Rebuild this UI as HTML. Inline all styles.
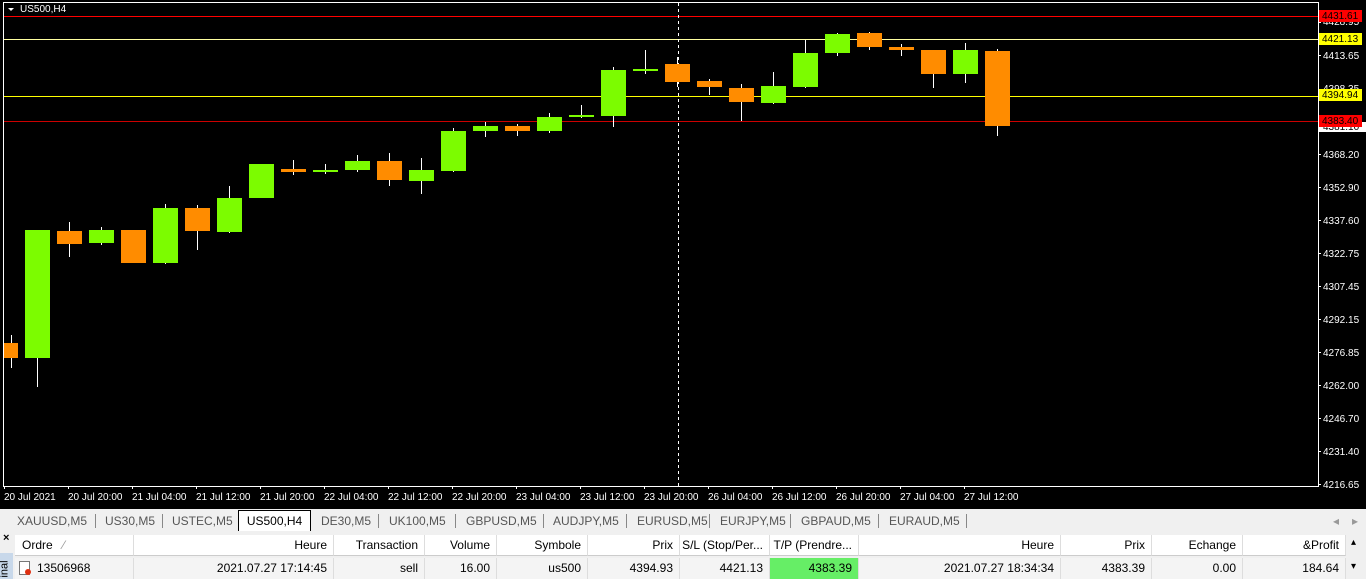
<!DOCTYPE html>
<html><head><meta charset="utf-8"><style>
body{margin:0;width:1366px;height:579px;overflow:hidden;background:#000;font-family:"Liberation Sans",Tahoma,sans-serif;}
#tabs{position:absolute;left:0;top:507px;width:1366px;height:23px;background:#f0f0f0;border-top:2px solid #000;font-size:12px;color:#555;}
.tab{position:absolute;top:5px;height:16px;line-height:14px;}
.sep{position:absolute;top:5px;width:1px;height:14px;background:#888;}
#term{position:absolute;left:0;top:531px;width:1366px;height:48px;background:#f0f0f0;font-size:12px;color:#000;}
.h,.c{position:absolute;height:21px;line-height:21px;text-align:right;box-sizing:border-box;padding-right:6px;}
.h{top:4px;background:#fff;border-right:1px solid #ddd;border-bottom:1px solid #ccc;}
.c{top:27px;background:#f4f4f4;border-right:1px solid #ddd;}
</style></head><body>
<svg width="1366" height="507" style="position:absolute;left:0;top:0" font-family="Liberation Sans, sans-serif" font-size="10">
<rect x="0" y="0" width="1366" height="507" fill="#000"/>
<rect x="3.5" y="2.5" width="1315" height="484" fill="none" stroke="#fff"/>
<line x1="4" y1="16.5" x2="1318" y2="16.5" stroke="#f00"/>
<line x1="4" y1="39.5" x2="1318" y2="39.5" stroke="#ffffa0"/>
<line x1="4" y1="96.5" x2="1318" y2="96.5" stroke="#ff0"/>
<line x1="4" y1="121.5" x2="1318" y2="121.5" stroke="#c00"/>
<line x1="678.5" y1="3" x2="678.5" y2="486" stroke="#fff" stroke-dasharray="3,3"/>
<polygon points="8,8 14,8 11,11" fill="#fff"/>
<text x="20" y="12" fill="#fff">US500,H4</text>
<g stroke="#fff">
<line x1="11.5" y1="335" x2="11.5" y2="368"/><line x1="37.5" y1="230" x2="37.5" y2="387"/><line x1="69.5" y1="222" x2="69.5" y2="257"/><line x1="101.5" y1="227" x2="101.5" y2="245"/><line x1="133.5" y1="230" x2="133.5" y2="263"/><line x1="165.5" y1="204" x2="165.5" y2="264"/><line x1="197.5" y1="205" x2="197.5" y2="250"/><line x1="229.5" y1="186" x2="229.5" y2="233"/><line x1="261.5" y1="164" x2="261.5" y2="198"/><line x1="293.5" y1="160" x2="293.5" y2="175"/><line x1="325.5" y1="164" x2="325.5" y2="174"/><line x1="357.5" y1="155" x2="357.5" y2="172"/><line x1="389.5" y1="153" x2="389.5" y2="186"/><line x1="421.5" y1="158" x2="421.5" y2="194"/><line x1="453.5" y1="128" x2="453.5" y2="172"/><line x1="485.5" y1="122" x2="485.5" y2="137"/><line x1="517.5" y1="124" x2="517.5" y2="136"/><line x1="549.5" y1="113" x2="549.5" y2="133"/><line x1="581.5" y1="105" x2="581.5" y2="118"/><line x1="613.5" y1="67" x2="613.5" y2="127"/><line x1="645.5" y1="50" x2="645.5" y2="74"/><line x1="677.5" y1="57" x2="677.5" y2="87"/><line x1="709.5" y1="79" x2="709.5" y2="95"/><line x1="741.5" y1="84" x2="741.5" y2="121"/><line x1="773.5" y1="72" x2="773.5" y2="104"/><line x1="805.5" y1="40" x2="805.5" y2="88"/><line x1="837.5" y1="33" x2="837.5" y2="56"/><line x1="869.5" y1="32" x2="869.5" y2="50"/><line x1="901.5" y1="44" x2="901.5" y2="56"/><line x1="933.5" y1="50" x2="933.5" y2="88"/><line x1="965.5" y1="43" x2="965.5" y2="83"/><line x1="997.5" y1="49" x2="997.5" y2="136"/>
</g>
<g fill="#ff8c00">
<rect x="4" y="343" width="14" height="15"/><rect x="57" y="231" width="25" height="13"/><rect x="121" y="230" width="25" height="33"/><rect x="185" y="208" width="25" height="23"/><rect x="281" y="169" width="25" height="3"/><rect x="377" y="161" width="25" height="19"/><rect x="505" y="126" width="25" height="5"/><rect x="665" y="64" width="25" height="18"/><rect x="697" y="81" width="25" height="6"/><rect x="729" y="88" width="25" height="14"/><rect x="857" y="33" width="25" height="14"/><rect x="889" y="47" width="25" height="3"/><rect x="921" y="50" width="25" height="24"/><rect x="985" y="51" width="25" height="75"/>
</g>
<g fill="#7cfc00">
<rect x="25" y="230" width="25" height="128"/><rect x="89" y="230" width="25" height="13"/><rect x="153" y="208" width="25" height="55"/><rect x="217" y="198" width="25" height="34"/><rect x="249" y="164" width="25" height="34"/><rect x="313" y="170" width="25" height="2"/><rect x="345" y="161" width="25" height="9"/><rect x="409" y="170" width="25" height="11"/><rect x="441" y="131" width="25" height="40"/><rect x="473" y="126" width="25" height="5"/><rect x="537" y="117" width="25" height="14"/><rect x="569" y="115" width="25" height="2"/><rect x="601" y="70" width="25" height="46"/><rect x="633" y="69" width="25" height="2"/><rect x="761" y="86" width="25" height="17"/><rect x="793" y="53" width="25" height="34"/><rect x="825" y="34" width="25" height="19"/><rect x="953" y="50" width="25" height="24"/>
</g>
<g fill="#fff">
<text x="1323" y="25">4428.95</text><text x="1323" y="59">4413.65</text><text x="1323" y="92">4398.35</text><rect x="1319" y="122" width="47" height="10"/><text x="1323" y="158">4368.20</text><text x="1323" y="191">4352.90</text><text x="1323" y="224">4337.60</text><text x="1323" y="257">4322.75</text><text x="1323" y="290">4307.45</text><text x="1323" y="323">4292.15</text><text x="1323" y="356">4276.85</text><text x="1323" y="389">4262.00</text><text x="1323" y="422">4246.70</text><text x="1323" y="455">4231.40</text><text x="1323" y="488">4216.65</text>
</g>
<g stroke="#fff"><line x1="1318" y1="22.5" x2="1321" y2="22.5"/><line x1="1318" y1="55.5" x2="1321" y2="55.5"/><line x1="1318" y1="154.5" x2="1321" y2="154.5"/><line x1="1318" y1="187.5" x2="1321" y2="187.5"/><line x1="1318" y1="220.5" x2="1321" y2="220.5"/><line x1="1318" y1="253.5" x2="1321" y2="253.5"/><line x1="1318" y1="286.5" x2="1321" y2="286.5"/><line x1="1318" y1="319.5" x2="1321" y2="319.5"/><line x1="1318" y1="352.5" x2="1321" y2="352.5"/><line x1="1318" y1="385.5" x2="1321" y2="385.5"/><line x1="1318" y1="418.5" x2="1321" y2="418.5"/><line x1="1318" y1="451.5" x2="1321" y2="451.5"/><line x1="1318" y1="484.5" x2="1321" y2="484.5"/></g>
<text x="1323" y="130" fill="#000">4381.10</text>
<rect x="1319" y="10" width="43" height="12" fill="#f00"/><text x="1322" y="19" fill="#000">4431.61</text>
<rect x="1319" y="33" width="43" height="12" fill="#ff0"/><text x="1322" y="42" fill="#000">4421.13</text>
<rect x="1319" y="89" width="43" height="12" fill="#ff0"/><text x="1322" y="98" fill="#000">4394.94</text>
<rect x="1319" y="115" width="43" height="12" fill="#f00"/><text x="1322" y="124" fill="#000">4383.40</text>
<g fill="#fff"><text x="4" y="500">20 Jul 2021</text><text x="68" y="500">20 Jul 20:00</text><text x="132" y="500">21 Jul 04:00</text><text x="196" y="500">21 Jul 12:00</text><text x="260" y="500">21 Jul 20:00</text><text x="324" y="500">22 Jul 04:00</text><text x="388" y="500">22 Jul 12:00</text><text x="452" y="500">22 Jul 20:00</text><text x="516" y="500">23 Jul 04:00</text><text x="580" y="500">23 Jul 12:00</text><text x="644" y="500">23 Jul 20:00</text><text x="708" y="500">26 Jul 04:00</text><text x="772" y="500">26 Jul 12:00</text><text x="836" y="500">26 Jul 20:00</text><text x="900" y="500">27 Jul 04:00</text><text x="964" y="500">27 Jul 12:00</text></g>
<g stroke="#fff"><line x1="4.5" y1="486" x2="4.5" y2="489"/><line x1="68.5" y1="486" x2="68.5" y2="489"/><line x1="132.5" y1="486" x2="132.5" y2="489"/><line x1="196.5" y1="486" x2="196.5" y2="489"/><line x1="260.5" y1="486" x2="260.5" y2="489"/><line x1="324.5" y1="486" x2="324.5" y2="489"/><line x1="388.5" y1="486" x2="388.5" y2="489"/><line x1="452.5" y1="486" x2="452.5" y2="489"/><line x1="516.5" y1="486" x2="516.5" y2="489"/><line x1="580.5" y1="486" x2="580.5" y2="489"/><line x1="644.5" y1="486" x2="644.5" y2="489"/><line x1="708.5" y1="486" x2="708.5" y2="489"/><line x1="772.5" y1="486" x2="772.5" y2="489"/><line x1="836.5" y1="486" x2="836.5" y2="489"/><line x1="900.5" y1="486" x2="900.5" y2="489"/><line x1="964.5" y1="486" x2="964.5" y2="489"/></g>
</svg>
<div id="tabs">
<span class="tab" style="left:17px">XAUUSD,M5</span><span class="sep" style="left:95px"></span>
<span class="tab" style="left:105px">US30,M5</span><span class="sep" style="left:162px"></span>
<span class="tab" style="left:172px">USTEC,M5</span>
<span style="position:absolute;left:238px;top:1px;width:71px;height:20px;background:#fff;border:1px solid #000;border-bottom:none;color:#000;text-align:center;line-height:20px">US500,H4</span>
<span class="tab" style="left:321px">DE30,M5</span><span class="sep" style="left:378px"></span>
<span class="tab" style="left:389px">UK100,M5</span><span class="sep" style="left:455px"></span>
<span class="tab" style="left:466px">GBPUSD,M5</span><span class="sep" style="left:543px"></span>
<span class="tab" style="left:553px">AUDJPY,M5</span><span class="sep" style="left:626px"></span>
<span class="tab" style="left:637px">EURUSD,M5</span><span class="sep" style="left:709px"></span>
<span class="tab" style="left:720px">EURJPY,M5</span><span class="sep" style="left:790px"></span>
<span class="tab" style="left:801px">GBPAUD,M5</span><span class="sep" style="left:878px"></span>
<span class="tab" style="left:889px">EURAUD,M5</span><span class="sep" style="left:966px"></span>
<span class="tab" style="left:1333px;color:#999">◂</span><span class="tab" style="left:1352px;color:#999">▸</span>
</div>
<div id="term">
<div style="position:absolute;left:0;top:0;width:14px;height:48px;background:#f0f0f0"></div>
<div style="position:absolute;left:0;top:22px;width:13px;height:26px;background:#c8d8ea;overflow:hidden"><span style="position:absolute;left:-4px;top:10px;transform:rotate(-90deg);font-size:11px;color:#000">inal</span></div>
<span style="position:absolute;left:3px;top:1px;font-size:11px;font-weight:bold">×</span>
<div class="h" style="left:15px;width:119px;text-align:left;padding-left:7px">Ordre &nbsp; <span style="color:#999">⁄</span></div>
<div class="h" style="left:134px;width:200px">Heure</div>
<div class="h" style="left:334px;width:91px">Transaction</div>
<div class="h" style="left:425px;width:72px">Volume</div>
<div class="h" style="left:497px;width:91px">Symbole</div>
<div class="h" style="left:588px;width:92px">Prix</div>
<div class="h" style="left:680px;width:90px">S/L (Stop/Per...</div>
<div class="h" style="left:770px;width:89px">T/P (Prendre...</div>
<div class="h" style="left:859px;width:202px">Heure</div>
<div class="h" style="left:1061px;width:91px">Prix</div>
<div class="h" style="left:1152px;width:91px">Echange</div>
<div class="h" style="left:1243px;width:103px">&amp;Profit</div>
<div class="c" style="left:15px;width:119px;text-align:left;padding-left:22px">13506968</div>
<span style="position:absolute;left:19px;top:30px;width:9px;height:12px;border:1px solid #777;background:#fff"></span><span style="position:absolute;left:25px;top:38px;width:6px;height:6px;border-radius:50%;background:#e03010"></span>
<div class="c" style="left:134px;width:200px">2021.07.27 17:14:45</div>
<div class="c" style="left:334px;width:91px">sell</div>
<div class="c" style="left:425px;width:72px">16.00</div>
<div class="c" style="left:497px;width:91px">us500</div>
<div class="c" style="left:588px;width:92px">4394.93</div>
<div class="c" style="left:680px;width:90px">4421.13</div>
<div class="c" style="left:770px;width:89px;background:#66ee66">4383.39</div>
<div class="c" style="left:859px;width:202px">2021.07.27 18:34:34</div>
<div class="c" style="left:1061px;width:91px">4383.39</div>
<div class="c" style="left:1152px;width:91px">0.00</div>
<div class="c" style="left:1243px;width:103px">184.64</div>
<span style="position:absolute;left:1351px;top:6px;font-size:10px">▴</span><span style="position:absolute;left:1351px;top:30px;font-size:10px">▾</span>
</div>
</body></html>
